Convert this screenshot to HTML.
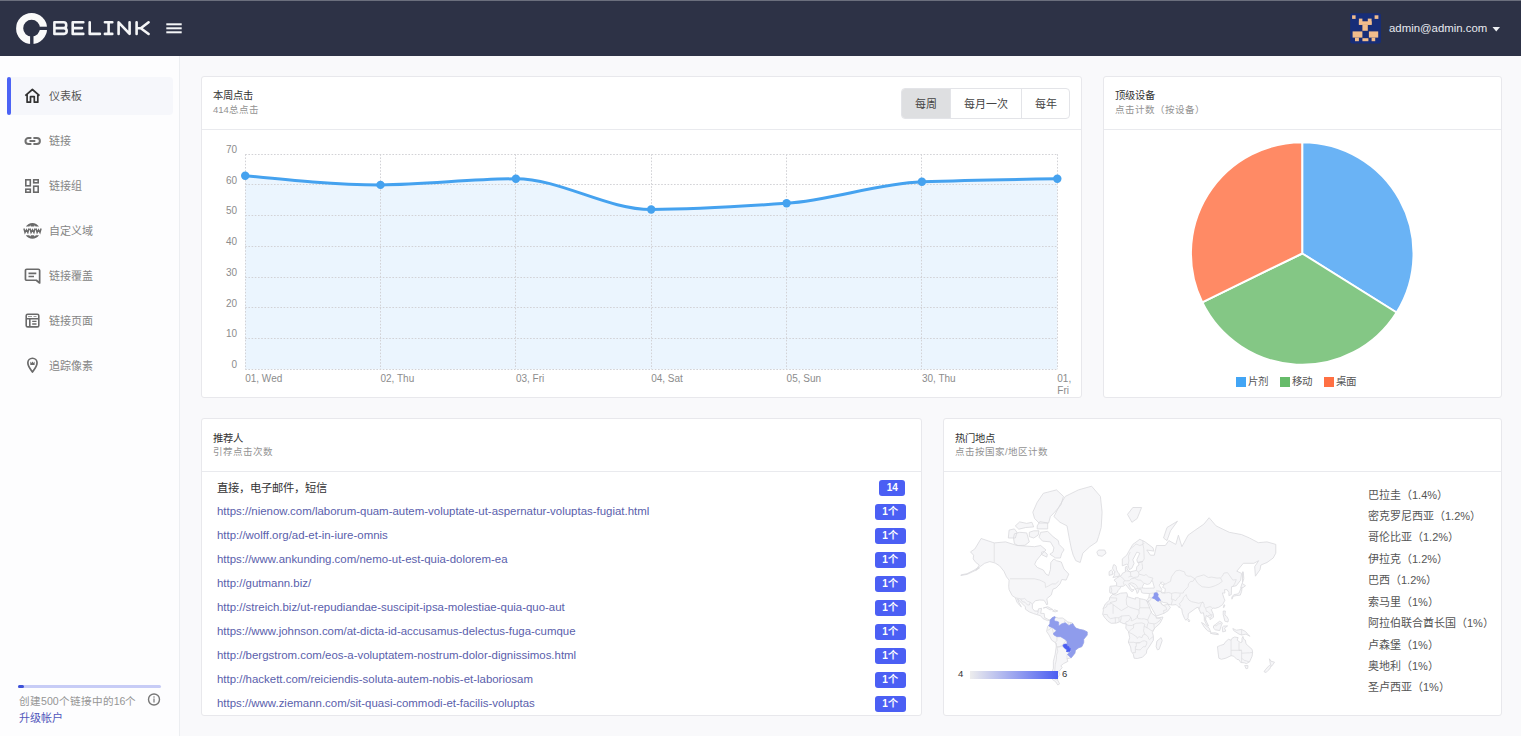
<!DOCTYPE html>
<html lang="zh-CN"><head><meta charset="utf-8">
<style>
*{margin:0;padding:0;box-sizing:border-box}
html,body{width:1521px;height:736px;overflow:hidden;background:#f9f9fb;font-family:"Liberation Sans",sans-serif;color:#333}
.abs{position:absolute}
#hdr{position:absolute;left:0;top:0;width:1521px;height:56px;background:#2d3246;border-top:1px solid #6b6f7d}
#side{position:absolute;left:0;top:56px;width:180px;height:680px;background:#fdfdfe;border-right:1px solid #eceef1}
.mi{position:absolute;left:7px;width:166px;height:38px;font-size:11px;color:#858585}
.mi.act{background:#f6f7fb;border-radius:4px}
.mi.act:before{content:"";position:absolute;left:0;top:0;width:3.5px;height:38px;background:#4c63f5;border-radius:3px}
.mi svg{position:absolute;left:17px;top:11px}
.mi span{position:absolute;left:42px;top:12px;line-height:14px}
.card{position:absolute;background:#fff;border:1px solid #e8e8ec;border-radius:3px}
.ch{position:absolute;left:0;top:0;right:0;height:53px;border-bottom:1px solid #e9eaee}
.ct{position:absolute;left:11px;top:12px;font-size:10.3px;font-weight:500;color:#333;line-height:13px}
.cs{position:absolute;left:11px;top:26px;font-size:9.5px;color:#939393;line-height:13px}
.url{position:absolute;left:16px;font-size:11.45px;color:#5a60ac;line-height:14px;white-space:nowrap}
.bdg{position:absolute;height:15.5px;background:#4b5ff4;border-radius:3px;color:#fff;font-size:10px;font-weight:bold;text-align:center;line-height:15.5px}
.loc{position:absolute;left:425px;font-size:11px;color:#555;line-height:14px;white-space:nowrap}
.yl{position:absolute;font-size:10px;color:#8c8c8c;text-align:right;width:30px;line-height:12px}
.xl{position:absolute;font-size:10px;color:#8c8c8c;line-height:12px;white-space:nowrap}
</style></head><body>
<div id="hdr">
  <svg class="abs" style="left:0;top:-1px" width="200" height="56" viewBox="0 0 200 56">
    <path fill="#fafafa" fill-rule="evenodd" d="M31.6,13 A15.5,15.5 0 1 0 31.6,44 A15.5,15.5 0 1 0 31.6,13 Z M31.6,19.8 A8.4,8.4 0 1 1 31.6,36.6 A8.4,8.4 0 1 1 31.6,19.8 Z"/>
    <rect x="39" y="26.7" width="10" height="3.3" fill="#2d3246"/>
    <rect x="30.1" y="35" width="3.4" height="10" fill="#2d3246"/>
    <g fill="none" stroke="#f4f5f7" stroke-width="2.6" stroke-linejoin="round" stroke-linecap="round">
      <path d="M54.4,22.3 V33.9 M54.4,22.3 H63.6 A2.6,2.6 0 0 1 66.2,24.9 V25.5 A2.6,2.6 0 0 1 63.6,28.1 H54.4 M54.4,28.1 H64 A2.9,2.9 0 0 1 66.7,31 V31 A2.9,2.9 0 0 1 64,33.9 H54.4"/>
      <path d="M83.3,22.3 H72.7 V33.9 H83.3 M72.7,28.1 H82"/>
      <path d="M89.7,22.3 V33.9 H99.9"/>
      <path d="M104.9,22.3 H112.3 M104.9,33.9 H112.3 M108.6,22.3 V33.9"/>
      <path d="M118.6,33.9 V22.3 L129.6,33.9 V22.3"/>
      <path d="M136.6,22.3 V34 M148.6,22.3 L140.8,28.2 L148.6,34 M136.6,28.2 H140.8"/>
    </g>
    <g fill="#f4f5f7"><rect x="166.3" y="23.3" width="15.4" height="2"/><rect x="166.3" y="27.3" width="15.4" height="2"/><rect x="166.3" y="31.3" width="15.4" height="2"/></g>
  </svg>
  <svg class="abs" style="left:1345px;top:7px" width="40" height="40" viewBox="1345 8 40 40">
    <rect x="1350.2" y="13.2" width="30.7" height="30.4" rx="2" fill="#172d78"/>
    <g fill="#f2bd8c">
      <rect x="1352.1" y="15.3" width="3.5" height="3.6"/><rect x="1374.6" y="15.3" width="3.8" height="3.6"/>
      <rect x="1358.9" y="18.6" width="3.5" height="6.2"/><rect x="1367.8" y="18.6" width="3.8" height="6.2"/>
      <rect x="1358.9" y="21.3" width="12.7" height="3.5"/><rect x="1362.4" y="24.3" width="5.4" height="6.5"/>
      <rect x="1352.6" y="31.4" width="9.8" height="6.2"/><rect x="1368.9" y="31.4" width="9.3" height="6.2"/>
      <rect x="1362.4" y="38.2" width="6" height="3"/><rect x="1355" y="37.6" width="3.9" height="3.6"/><rect x="1371.6" y="37.6" width="3.6" height="3.6"/>
    </g>
  </svg>
  <div class="abs" style="left:1389px;top:19px;font-size:11.4px;color:#e8eaf0;line-height:16px">admin@admin.com</div>
  <svg class="abs" style="left:1492px;top:25px" width="9" height="6"><path d="M0.5,1 L8,1 L4.25,5.5 Z" fill="#eef0f4"/></svg>
</div>

<div id="side">
  <div class="mi act" style="top:21px">
    <svg width="17" height="16" viewBox="0 0 17 16"><path d="M1.3,7.7 L8.4,1.5 L15.5,7.7 M3.1,6.3 V14.2 H6.5 V8.6 H10.3 V14.2 H13.8 V6.3" fill="none" stroke="#333" stroke-width="1.7" stroke-linejoin="round"/></svg>
    <span style="color:#555">仪表板</span>
  </div>
  <div class="mi" style="top:66px">
    <svg width="17" height="16" viewBox="0 0 17 16"><path d="M7.4,5 H4.5 A3.05,3.05 0 0 0 4.5,11.1 H7.4 M9.4,5 H12.85 A3.05,3.05 0 0 1 12.85,11.1 H9.4 M5.5,8.1 H11.3" fill="none" stroke="#707070" stroke-width="2"/></svg>
    <span>链接</span>
  </div>
  <div class="mi" style="top:111px">
    <svg width="16" height="16" viewBox="0 0 16 16"><g fill="none" stroke="#6a6a6a" stroke-width="1.6"><rect x="1.8" y="1.8" width="4.5" height="6"/><rect x="9.7" y="1.8" width="4.5" height="3"/><rect x="1.8" y="11.2" width="4.5" height="3"/><rect x="9.7" y="8.2" width="4.5" height="6"/></g></svg>
    <span>链接组</span>
  </div>
  <div class="mi" style="top:156px">
    <svg style="left:15px;top:5px" width="22" height="24" viewBox="22 217 22 24"><g fill="#6a6a6a"><path d="M25.8,226.6 A7.8,7.8 0 0 1 39,226.6 Z M25.8,235.2 A7.8,7.8 0 0 0 39,235.2 Z"/></g><g fill="#fff"><path d="M29.3,226.7 L30.2,225.2 L31.1,226.7 Z M33.9,226.7 L34.8,225.2 L35.7,226.7 Z M29.3,235.1 L30.2,236.6 L31.1,235.1 Z M33.9,235.1 L34.8,236.6 L35.7,235.1 Z"/></g><path d="M23.90,228.5 L25.00,232.5 L26.43,229.8 L27.85,232.5 L28.95,228.5 M29.97,228.5 L31.07,232.5 L32.50,229.8 L33.92,232.5 L35.02,228.5 M36.04,228.5 L37.14,232.5 L38.57,229.8 L39.99,232.5 L41.09,228.5 " fill="none" stroke="#6a6a6a" stroke-width="1.4" stroke-linejoin="miter"/></svg>
    <span>自定义域</span>
  </div>
  <div class="mi" style="top:201px">
    <svg width="17" height="17" viewBox="0 0 17 17"><g fill="none" stroke="#6a6a6a" stroke-width="1.7" stroke-linejoin="round"><path d="M2.8,1.25 H14.3 Q15.65,1.25 15.65,2.6 V15 L12.3,12.25 H2.8 Q1.45,12.25 1.45,10.9 V2.6 Q1.45,1.25 2.8,1.25 Z"/><path d="M4.5,5.4 H12.3 M4.5,8.5 H10"/></g></svg>
    <span>链接覆盖</span>
  </div>
  <div class="mi" style="top:246px">
    <svg width="17" height="16" viewBox="0 0 17 16"><g fill="none" stroke="#6a6a6a" stroke-width="1.6"><rect x="2.2" y="1.2" width="12.6" height="12.7" rx="1.5"/><path d="M2.2,5.8 H14.8 M5.8,5.8 V13.9"/><path d="M8.2,8.3 H12.5 M8.2,11 H12.5" stroke-width="1.3"/><path d="M4,3.5 H8 M9.5,3.5 H12.5" stroke="#9a9a9a" stroke-width="1"/></g></svg>
    <span>链接页面</span>
  </div>
  <div class="mi" style="top:291px">
    <svg style="top:10px" width="17" height="17" viewBox="0 0 17 17"><path d="M8.45,15 C6.5,12.5 3.85,9.4 3.85,5.85 A4.6,4.6 0 0 1 13.05,5.85 C13.05,9.4 10.4,12.5 8.45,15 Z" fill="none" stroke="#6a6a6a" stroke-width="1.7" stroke-linejoin="round"/><path d="M6.3,4.5 L7.4,5.9 L8.45,4.6 L9.5,5.9 L10.6,4.5 V7.9 H6.3 Z" fill="#6a6a6a"/></svg>
    <span>追踪像素</span>
  </div>
  <div class="abs" style="left:18px;top:629px;width:143px;height:3px;background:#c7ccf6;border-radius:2px"><div style="width:6px;height:3px;background:#3e51d8;border-radius:2px"></div></div>
  <div class="abs" style="left:19px;top:637.5px;font-size:10.6px;color:#959595;line-height:14px">创建500个链接中的16个</div>
  <svg class="abs" style="left:147px;top:637px" width="14" height="14" viewBox="0 0 14 14"><circle cx="7" cy="6.5" r="5.5" fill="none" stroke="#777" stroke-width="1.4"/><rect x="6.4" y="5.5" width="1.2" height="4" fill="#777"/><circle cx="7" cy="4" r="0.75" fill="#777"/></svg>
  <div class="abs" style="left:19px;top:655px;font-size:11px;color:#5057bb;line-height:14px">升级帐户</div>
</div>

<!-- card 1 -->
<div class="card" style="left:201px;top:76px;width:881px;height:322px">
  <div class="ch"></div>
  <div class="ct">本周点击</div>
  <div class="cs">414总点击</div>
  <div class="abs" style="left:698.5px;top:11px;width:169px;height:31px;border:1px solid #e3e4e8;border-radius:4px;overflow:hidden;font-size:11px;font-weight:500;color:#444">
    <div class="abs" style="left:0;top:0;width:48px;height:29px;background:#dedfe1"></div>
    <div class="abs" style="left:48px;top:0;width:1px;height:29px;background:#e3e4e8"></div>
    <div class="abs" style="left:119px;top:0;width:1px;height:29px;background:#e3e4e8"></div>
    <div class="abs" style="left:0;top:8px;width:48px;text-align:center;line-height:14px">每周</div>
    <div class="abs" style="left:49px;top:8px;width:70px;text-align:center;line-height:14px">每月一次</div>
    <div class="abs" style="left:120px;top:8px;width:48px;text-align:center;line-height:14px">每年</div>
  </div>
</div>
<svg class="abs" style="left:0;top:0" width="1521" height="736" viewBox="0 0 1521 736">
<path fill="#ebf5fe" d="M245.2,175.7 C290.3,180.3 335.4,184.9 380.5,184.9 C425.7,184.9 470.8,178.8 515.9,178.8 C561.0,178.8 606.1,209.5 651.2,209.5 C696.4,209.5 741.5,206.5 786.6,203.3 C831.7,200.2 876.8,183.6 921.9,181.8 C967.1,180.1 1012.2,179.4 1057.3,178.8 L1057.3,369.2 L245.2,369.2 Z"/>
<path stroke="#d2d2d6" stroke-width="1" stroke-dasharray="1.6,1.6" fill="none" d="M245.2,369.5 H1057.3 M245.2,338.5 H1057.3 M245.2,307.5 H1057.3 M245.2,277.5 H1057.3 M245.2,246.5 H1057.3 M245.2,215.5 H1057.3 M245.2,184.5 H1057.3 M245.2,154.5 H1057.3 M245.5,154.2 V369.2 M380.5,154.2 V369.2 M515.5,154.2 V369.2 M651.5,154.2 V369.2 M786.5,154.2 V369.2 M921.5,154.2 V369.2 M1057.5,154.2 V369.2"/>
<path fill="none" stroke="#45a2ef" stroke-width="3" d="M245.2,175.7 C290.3,180.3 335.4,184.9 380.5,184.9 C425.7,184.9 470.8,178.8 515.9,178.8 C561.0,178.8 606.1,209.5 651.2,209.5 C696.4,209.5 741.5,206.5 786.6,203.3 C831.7,200.2 876.8,183.6 921.9,181.8 C967.1,180.1 1012.2,179.4 1057.3,178.8"/>
<circle cx="245.2" cy="175.7" r="4.2" fill="#45a2ef"/>
<circle cx="380.5" cy="184.9" r="4.2" fill="#45a2ef"/>
<circle cx="515.9" cy="178.8" r="4.2" fill="#45a2ef"/>
<circle cx="651.2" cy="209.5" r="4.2" fill="#45a2ef"/>
<circle cx="786.6" cy="203.3" r="4.2" fill="#45a2ef"/>
<circle cx="921.9" cy="181.8" r="4.2" fill="#45a2ef"/>
<circle cx="1057.3" cy="178.8" r="4.2" fill="#45a2ef"/>
</svg>
<div class="yl" style="left:207px;top:358.9px">0</div>
<div class="yl" style="left:207px;top:328.2px">10</div>
<div class="yl" style="left:207px;top:297.5px">20</div>
<div class="yl" style="left:207px;top:266.8px">30</div>
<div class="yl" style="left:207px;top:236.0px">40</div>
<div class="yl" style="left:207px;top:205.3px">50</div>
<div class="yl" style="left:207px;top:174.6px">60</div>
<div class="yl" style="left:207px;top:143.9px">70</div>
<div class="xl" style="left:245.2px;top:373px">01, Wed</div>
<div class="xl" style="left:380.5px;top:373px">02, Thu</div>
<div class="xl" style="left:515.9px;top:373px">03, Fri</div>
<div class="xl" style="left:651.2px;top:373px">04, Sat</div>
<div class="xl" style="left:786.6px;top:373px">05, Sun</div>
<div class="xl" style="left:921.9px;top:373px">30, Thu</div>
<div class="xl" style="left:1057.3px;top:373px">01,<br>Fri</div>

<!-- card 2 -->
<div class="card" style="left:1103px;top:76px;width:399px;height:322px">
  <div class="ch"></div>
  <div class="ct">顶级设备</div>
  <div class="cs">点击计数（按设备）</div>
</div>

<!-- card 3 -->
<div class="card" style="left:201px;top:418px;width:721px;height:298px">
  <div class="ch"></div>
  <div class="ct" style="top:13px">推荐人</div>
  <div class="cs">引荐点击次数</div>
</div>

<!-- card 4 -->
<div class="card" style="left:943px;top:418px;width:559px;height:298px">
  <div class="ch"></div>
  <div class="ct" style="top:13px">热门地点</div>
  <div class="cs">点击按国家/地区计数</div>
</div>
<!--PIE-->
<svg class="abs" style="left:0;top:0" width="1521" height="736" viewBox="0 0 1521 736">
<path fill="#6ab3f5" stroke="#fff" stroke-width="2" stroke-linejoin="round" d="M1302.2,253.5 L1302.2,142.2 A111.3,111.3 0 0 1 1396.6,312.5 Z"/>
<path fill="#84c785" stroke="#fff" stroke-width="2" stroke-linejoin="round" d="M1302.2,253.5 L1396.6,312.5 A111.3,111.3 0 0 1 1202.2,302.3 Z"/>
<path fill="#ff8a65" stroke="#fff" stroke-width="2" stroke-linejoin="round" d="M1302.2,253.5 L1202.2,302.3 A111.3,111.3 0 0 1 1302.2,142.2 Z"/>
</svg>
<div class="abs" style="left:1236px;top:377px;width:10px;height:9.5px;background:#42a5f5"></div>
<div class="abs" style="left:1248px;top:374px;font-size:10.5px;color:#555;line-height:14px">片剂</div>
<div class="abs" style="left:1280px;top:377px;width:10px;height:9.5px;background:#66bb6a"></div>
<div class="abs" style="left:1292px;top:374px;font-size:10.5px;color:#555;line-height:14px">移动</div>
<div class="abs" style="left:1324px;top:377px;width:10px;height:9.5px;background:#ff7043"></div>
<div class="abs" style="left:1336px;top:374px;font-size:10.5px;color:#555;line-height:14px">桌面</div>
<!--REF-->
<div class="abs" style="left:217px;top:481px;font-size:11.3px;font-weight:500;color:#333;line-height:15px">直接，电子邮件，短信</div>
<div class="bdg" style="left:879.3px;top:480.3px;width:25.8px">14</div>
<div class="url" style="left:217px;top:504px">https://nienow.com/laborum-quam-autem-voluptate-ut-aspernatur-voluptas-fugiat.html</div>
<div class="bdg" style="left:874.5px;top:504.2px;width:31px">1个</div>
<div class="url" style="left:217px;top:528px">http://wolff.org/ad-et-in-iure-omnis</div>
<div class="bdg" style="left:874.5px;top:528.2px;width:31px">1个</div>
<div class="url" style="left:217px;top:552px">https://www.ankunding.com/nemo-ut-est-quia-dolorem-ea</div>
<div class="bdg" style="left:874.5px;top:552.2px;width:31px">1个</div>
<div class="url" style="left:217px;top:576px">http://gutmann.biz/</div>
<div class="bdg" style="left:874.5px;top:576.2px;width:31px">1个</div>
<div class="url" style="left:217px;top:600px">http://streich.biz/ut-repudiandae-suscipit-ipsa-molestiae-quia-quo-aut</div>
<div class="bdg" style="left:874.5px;top:600.2px;width:31px">1个</div>
<div class="url" style="left:217px;top:624px">https://www.johnson.com/at-dicta-id-accusamus-delectus-fuga-cumque</div>
<div class="bdg" style="left:874.5px;top:624.2px;width:31px">1个</div>
<div class="url" style="left:217px;top:648px">http://bergstrom.com/eos-a-voluptatem-nostrum-dolor-dignissimos.html</div>
<div class="bdg" style="left:874.5px;top:648.2px;width:31px">1个</div>
<div class="url" style="left:217px;top:672px">http://hackett.com/reiciendis-soluta-autem-nobis-et-laboriosam</div>
<div class="bdg" style="left:874.5px;top:672.2px;width:31px">1个</div>
<div class="url" style="left:217px;top:696px">https://www.ziemann.com/sit-quasi-commodi-et-facilis-voluptas</div>
<div class="bdg" style="left:874.5px;top:696.2px;width:31px">1个</div>
<!--LOC-->
<div class="loc" style="left:1368px;top:487.5px">巴拉圭（1.4%）</div>
<div class="loc" style="left:1368px;top:508.9px">密克罗尼西亚（1.2%）</div>
<div class="loc" style="left:1368px;top:530.4px">哥伦比亚（1.2%）</div>
<div class="loc" style="left:1368px;top:551.8px">伊拉克（1.2%）</div>
<div class="loc" style="left:1368px;top:573.2px">巴西（1.2%）</div>
<div class="loc" style="left:1368px;top:594.6px">索马里（1%）</div>
<div class="loc" style="left:1368px;top:616.1px">阿拉伯联合酋长国（1%）</div>
<div class="loc" style="left:1368px;top:637.5px">卢森堡（1%）</div>
<div class="loc" style="left:1368px;top:658.9px">奥地利（1%）</div>
<div class="loc" style="left:1368px;top:680.4px">圣卢西亚（1%）</div>
<!--MAP-->
<svg class="abs" style="left:943px;top:472px" width="420" height="244" viewBox="943 472 420 244">
<path fill="#f6f6f8" stroke="#d9d9dd" stroke-width="0.8" stroke-linejoin="round" fill-rule="nonzero" d="M970.5,551.9 L974.9,548.9 L981.1,538.5 L994.2,542.9 L1005.6,541.9 L1017.0,545.5 L1034.6,546.7 L1040.7,545.5 L1046.0,550.0 L1041.6,554.2 L1036.3,560.7 L1034.7,564.2 L1037.2,567.4 L1043.3,570.0 L1046.0,574.1 L1048.6,575.5 L1050.4,569.7 L1050.8,562.5 L1053.9,558.9 L1056.5,560.7 L1061.3,562.0 L1064.0,569.0 L1068.8,574.1 L1066.1,580.1 L1061.8,579.5 L1060.0,583.9 L1056.1,588.0 L1053.0,589.1 L1051.2,595.1 L1046.8,598.7 L1047.7,604.1 L1046.8,605.0 L1045.3,602.2 L1043.8,600.2 L1039.8,600.0 L1035.4,600.7 L1032.4,604.1 L1032.4,608.3 L1034.6,611.0 L1038.1,611.0 L1038.5,608.8 L1041.6,608.3 L1040.7,613.3 L1044.2,613.5 L1044.7,617.7 L1048.2,619.4 L1050.1,620.1 L1047.7,620.7 L1042.9,618.6 L1040.7,615.8 L1036.8,614.6 L1033.7,613.6 L1029.3,611.9 L1025.4,609.2 L1025.4,606.9 L1019.7,601.2 L1017.5,598.7 L1018.8,602.2 L1021.4,606.9 L1019.7,605.5 L1017.0,602.2 L1015.3,597.7 L1012.2,595.6 L1009.1,589.7 L1008.7,586.3 L1009.1,580.1 L1006.5,576.9 L1003.9,571.2 L999.5,565.8 L995.1,563.0 L989.8,561.6 L984.6,563.3 L980.2,566.6 L975.8,570.5 L979.3,565.0 L975.8,562.5 L973.2,558.9 L973.6,555.2Z M1037.2,528.9 L1047.7,528.9 L1047.7,523.0 L1039.8,521.6 L1037.2,525.9Z M1015.3,525.9 L1019.7,521.9 L1026.7,523.4 L1031.9,522.3 L1033.7,526.9 L1025.8,527.5 L1018.8,529.2Z M1029.3,536.6 L1033.7,538.0 L1038.1,535.2 L1039.0,530.8 L1033.7,530.8 L1029.3,532.3Z M1041.6,554.6 L1046.8,557.1 L1047.3,554.2 L1044.2,551.5 L1041.6,552.1Z M979.3,568.2 L974.0,571.1 L967.0,574.4 L960.9,575.5 L960.9,574.9 L967.0,573.7 L974.0,570.2 L978.4,567.4Z M1053.9,516.5 L1060.0,504.9 L1065.3,496.4 L1078.4,489.9 L1091.6,486.2 L1100.4,496.4 L1102.1,512.2 L1101.2,527.5 L1098.6,536.6 L1096.8,541.9 L1089.8,546.7 L1082.8,553.2 L1080.2,562.5 L1075.8,560.7 L1073.2,555.2 L1071.4,548.9 L1069.7,540.6 L1067.0,525.9 L1060.0,522.3Z M1064.0,550.0 L1061.8,553.2 L1060.4,558.0 L1055.6,558.0 L1049.9,554.2 L1053.0,552.1 L1053.9,547.8 L1050.4,541.9 L1042.5,541.1 L1039.0,537.2 L1040.7,532.3 L1047.7,531.4 L1053.0,536.6 L1058.3,540.6 L1059.1,544.4 L1063.5,548.9Z M1013.5,538.0 L1014.4,533.8 L1019.7,532.3 L1026.7,532.9 L1029.3,541.9 L1024.9,545.3 L1017.9,545.5 L1014.4,543.6Z M1032.8,512.2 L1037.2,502.3 L1043.3,493.3 L1056.5,489.9 L1063.5,496.4 L1060.9,504.9 L1054.7,512.2 L1050.4,516.5 L1048.6,523.0 L1039.0,523.0 L1034.6,518.5Z M1008.3,538.0 L1009.1,530.1 L1014.4,528.9 L1017.0,532.3 L1015.3,538.0Z M1050.1,620.1 L1052.1,617.7 L1054.7,616.8 L1058.3,618.1 L1062.6,618.0 L1065.3,619.9 L1067.9,622.0 L1072.3,622.9 L1074.0,625.5 L1075.8,628.1 L1079.3,629.3 L1083.7,630.2 L1087.2,631.9 L1087.2,635.0 L1083.7,639.3 L1083.7,642.5 L1081.9,646.6 L1078.4,647.9 L1075.4,650.3 L1074.9,653.2 L1071.4,657.7 L1067.0,658.8 L1067.9,661.4 L1063.5,663.6 L1060.9,665.8 L1062.2,667.6 L1058.7,671.7 L1060.0,674.3 L1057.4,678.2 L1057.8,680.3 L1059.6,683.9 L1057.8,685.0 L1055.6,681.7 L1052.5,679.6 L1051.7,673.0 L1053.4,668.1 L1053.4,661.4 L1055.2,654.2 L1056.1,647.5 L1056.5,643.4 L1051.7,640.2 L1049.0,635.0 L1046.6,631.5 L1047.3,628.1 L1047.7,626.3 L1048.8,625.5 L1049.9,623.8Z M1109.6,591.1 L1110.0,586.3 L1116.6,585.7 L1116.6,582.7 L1114.0,580.1 L1116.6,578.2 L1119.7,576.2 L1121.4,575.5 L1122.3,573.4 L1125.4,571.9 L1125.4,566.9 L1127.1,566.3 L1127.1,569.0 L1128.9,571.2 L1130.2,571.9 L1134.1,570.9 L1136.3,570.5 L1136.8,566.6 L1139.0,565.0 L1138.5,562.5 L1142.9,561.6 L1137.6,562.5 L1136.8,559.8 L1139.8,553.2 L1136.8,552.1 L1132.8,559.8 L1134.1,563.3 L1131.9,568.2 L1129.3,569.7 L1128.0,565.0 L1126.7,564.2 L1122.3,565.8 L1122.3,558.9 L1126.7,555.2 L1130.2,548.9 L1132.8,544.4 L1139.8,539.3 L1145.1,541.9 L1153.0,547.8 L1153.9,551.1 L1146.8,550.0 L1150.4,555.2 L1154.3,555.2 L1156.5,545.5 L1165.3,545.5 L1168.8,540.6 L1175.8,544.4 L1178.4,535.2 L1181.9,546.7 L1188.1,535.2 L1194.2,530.8 L1203.9,524.1 L1209.1,517.7 L1216.1,525.9 L1229.3,532.3 L1241.6,534.6 L1249.5,538.0 L1258.3,542.7 L1267.0,541.9 L1275.8,544.4 L1275.8,553.2 L1273.2,558.0 L1267.0,562.5 L1260.9,565.0 L1260.0,569.7 L1255.4,576.2 L1254.7,566.6 L1258.7,560.7 L1253.9,563.3 L1243.3,563.3 L1236.8,571.2 L1241.6,573.4 L1240.7,580.1 L1236.3,585.7 L1231.5,586.8 L1231.3,594.6 L1228.9,595.6 L1228.9,592.5 L1227.1,589.7 L1224.5,589.7 L1224.9,593.0 L1222.3,593.0 L1224.0,598.2 L1224.9,600.2 L1222.7,604.6 L1218.8,607.2 L1215.3,608.3 L1213.1,608.1 L1211.3,609.7 L1213.3,614.2 L1213.5,617.3 L1210.0,619.7 L1210.0,618.1 L1208.0,616.7 L1206.1,615.5 L1205.6,619.9 L1208.7,626.1 L1206.5,624.6 L1204.3,620.3 L1204.3,617.3 L1203.4,612.8 L1200.8,613.3 L1199.0,609.2 L1198.2,607.2 L1196.0,608.0 L1193.8,609.7 L1188.3,613.7 L1188.1,617.7 L1185.9,620.3 L1184.6,618.6 L1182.4,613.3 L1181.7,608.8 L1179.3,607.4 L1178.0,606.5 L1176.2,604.6 L1172.3,605.0 L1167.9,604.4 L1167.5,603.1 L1163.1,602.4 L1160.0,600.2 L1161.8,604.1 L1163.1,605.5 L1166.6,604.6 L1167.4,603.8 L1170.4,607.4 L1167.9,610.9 L1164.0,613.3 L1156.1,616.2 L1155.2,614.2 L1152.1,608.8 L1148.6,602.2 L1148.5,600.7 L1147.9,602.4 L1146.5,600.3 L1148.2,598.7 L1149.0,596.7 L1149.5,593.5 L1143.3,593.2 L1141.6,592.5 L1141.1,590.3 L1140.7,589.1 L1139.0,589.1 L1138.5,591.9 L1137.2,593.5 L1136.3,590.3 L1135.0,589.1 L1134.6,587.4 L1131.9,585.7 L1129.7,583.3 L1128.7,583.9 L1130.2,587.4 L1131.8,589.7 L1134.1,589.7 L1131.9,591.9 L1131.6,591.4 L1128.4,588.0 L1127.1,586.3 L1125.6,584.6 L1123.2,586.3 L1120.7,586.3 L1120.5,587.7 L1117.9,590.8 L1117.5,592.3 L1116.1,593.3 L1113.1,594.1 L1112.2,593.0 L1110.0,593.0Z M1102.7,614.4 L1103.4,610.1 L1103.0,608.8 L1105.2,604.1 L1109.4,600.2 L1109.6,597.7 L1112.6,594.3 L1116.1,595.1 L1120.5,593.2 L1126.7,592.7 L1127.5,595.1 L1127.1,596.5 L1131.2,597.9 L1135.4,599.2 L1135.4,597.7 L1138.1,597.7 L1139.8,598.7 L1143.3,599.3 L1146.5,600.3 L1149.0,606.1 L1150.8,611.0 L1152.1,613.5 L1155.9,616.4 L1156.5,618.1 L1162.9,617.0 L1162.6,618.2 L1160.0,623.3 L1154.7,628.1 L1152.4,632.4 L1153.4,636.3 L1153.4,640.2 L1149.0,647.0 L1146.8,650.1 L1146.4,653.2 L1142.5,657.2 L1137.2,658.5 L1134.1,658.2 L1133.3,654.2 L1131.2,651.3 L1130.6,647.0 L1128.3,642.0 L1129.7,637.6 L1128.4,631.5 L1125.8,628.1 L1126.2,623.9 L1123.2,623.5 L1119.7,621.8 L1116.1,623.1 L1111.3,623.3 L1107.8,621.2 L1106.1,619.0 L1104.7,617.7Z M1112.9,577.5 L1119.2,576.2 L1119.4,573.8 L1117.9,572.7 L1116.6,569.7 L1116.1,566.3 L1114.8,564.8 L1113.5,564.8 L1112.5,568.2 L1113.5,570.5 L1115.3,571.9 L1114.0,573.0 L1114.4,575.2Z M1109.1,575.4 L1112.6,574.5 L1112.6,571.2 L1111.3,570.0 L1109.1,571.7Z M1096.8,552.1 L1098.6,550.0 L1104.7,550.0 L1106.1,553.2 L1102.1,556.3 L1098.2,555.5Z M1127.5,514.4 L1132.8,507.5 L1141.6,507.5 L1137.2,518.5 L1131.9,522.3Z M1163.5,538.0 L1167.0,527.5 L1177.5,521.2 L1170.5,530.8 L1167.0,540.6Z M1231.9,599.2 L1233.3,596.2 L1236.3,595.6 L1240.3,595.1 L1241.6,591.4 L1242.0,588.0 L1240.7,588.6 L1239.4,592.5 L1237.2,594.1 L1234.1,594.6 L1231.9,596.7Z M1240.7,588.0 L1242.0,583.3 L1245.5,585.7 L1243.3,587.4Z M1242.5,582.7 L1243.8,578.8 L1243.3,571.9 L1242.5,571.9Z M1223.3,607.4 L1224.0,604.8 L1224.9,605.0 L1223.8,607.8Z M1223.2,611.0 L1225.4,611.0 L1224.9,615.1 L1226.7,616.4 L1228.4,619.4 L1228.0,622.0 L1224.9,621.2 L1224.0,617.7 L1223.2,614.6Z M1201.5,622.5 L1203.9,623.8 L1209.1,628.1 L1210.9,632.3 L1207.4,630.6 L1204.3,627.2Z M1210.2,633.0 L1215.3,632.8 L1218.3,633.8 L1218.3,634.7 L1212.6,633.9Z M1213.5,625.9 L1215.3,624.6 L1219.7,621.2 L1222.3,622.9 L1221.0,626.3 L1219.7,630.6 L1215.3,629.8 L1213.5,628.1Z M1222.7,631.9 L1222.3,627.2 L1223.6,626.1 L1227.6,625.9 L1224.5,628.1 L1225.8,631.1Z M1232.8,628.5 L1236.3,630.2 L1241.6,629.4 L1245.5,631.5 L1247.7,634.1 L1249.9,636.3 L1246.0,634.1 L1241.6,635.0 L1239.0,634.1 L1233.7,630.6Z M1217.5,646.6 L1217.9,650.8 L1218.8,658.2 L1221.4,659.3 L1225.8,658.2 L1231.1,655.7 L1233.7,656.2 L1236.8,659.3 L1239.0,659.8 L1240.7,662.5 L1244.2,662.8 L1246.4,663.6 L1249.5,661.9 L1252.1,656.2 L1252.6,652.2 L1252.1,649.4 L1249.0,646.6 L1246.0,643.8 L1245.4,640.2 L1243.8,639.3 L1242.9,636.4 L1242.0,638.4 L1242.0,642.0 L1240.3,642.5 L1237.2,640.2 L1238.1,637.6 L1234.6,637.0 L1231.9,638.4 L1231.1,640.2 L1228.4,639.3 L1224.9,642.5 L1224.0,644.3 L1220.5,645.4Z M1244.7,665.5 L1248.0,665.6 L1247.7,668.4 L1246.0,668.7Z M1269.4,658.8 L1271.0,661.2 L1274.5,662.2 L1273.2,664.1 L1271.4,666.4 L1270.4,663.9Z M1269.4,665.3 L1270.8,666.4 L1269.7,669.1 L1267.9,670.5 L1266.1,672.5 L1264.0,671.7 L1265.7,669.3Z M1161.1,637.6 L1162.2,640.7 L1159.1,649.4 L1157.4,649.8 L1156.1,646.6 L1156.9,641.1Z M1187.9,620.3 L1188.3,618.8 L1189.7,620.7 L1189.0,622.0Z M1043.3,608.0 L1047.7,606.7 L1052.8,609.5 L1049.9,609.8 L1046.0,607.4Z M1052.5,611.0 L1054.7,609.8 L1057.8,611.0 L1055.2,611.9Z"/>
<path fill="#fff" stroke="#dcdcdf" stroke-width="0.8" d="M1142.5,588.0 L1142.5,586.3 L1144.2,583.3 L1147.3,584.5 L1149.9,583.6 L1151.2,581.4 L1152.5,580.8 L1154.3,587.4 L1154.3,588.0 L1149.9,588.2 L1145.5,588.3Z M1159.1,585.1 L1162.2,581.7 L1164.4,583.9 L1162.6,587.4 L1165.3,588.6 L1164.8,593.0 L1161.8,593.0 L1160.9,591.4 L1161.8,589.4Z"/>
<path fill="none" stroke="#dddde0" stroke-width="0.7" stroke-linejoin="round" d="M1010.0,578.8 L1034.6,578.8 L1039.8,580.1 L1045.1,582.7 L1045.5,587.4 L1048.6,585.9 L1052.1,583.9 L1055.6,583.9 L1058.7,581.0 M994.2,542.9 L994.2,562.0 M1015.3,597.7 L1020.5,598.9 L1023.2,598.9 L1024.5,598.4 L1027.5,601.2 L1030.2,602.2 L1032.4,604.1 M1037.2,611.5 L1038.5,611.7 L1037.7,613.3 L1037.0,614.5 M1055.2,642.5 L1056.9,647.0 L1057.8,651.3 L1056.5,655.2 L1056.5,659.3 L1055.2,664.7 L1054.9,669.3 L1054.3,674.3 L1053.4,676.9 L1054.7,679.2 L1057.8,680.3 M1056.8,647.0 L1060.0,646.6 L1063.0,646.7 M1067.0,641.4 L1065.3,641.3 L1063.0,644.3 L1059.1,647.0 L1056.8,647.0 M1056.9,636.7 L1056.9,640.7 L1055.2,642.5 M1051.9,627.4 L1049.0,629.8 L1047.5,630.2 M1053.9,635.0 L1051.9,627.4 M1067.0,658.8 L1066.9,656.2 L1067.4,654.4 M1065.3,619.9 L1064.4,622.0 L1065.3,622.7 M1067.9,622.0 L1068.3,624.0 L1068.8,625.5 M1070.5,622.5 L1070.5,625.5 M1116.3,585.9 L1120.7,586.8 M1111.3,587.4 L1111.8,590.3 L1111.3,592.5 M1120.1,576.2 L1121.8,577.5 L1123.2,578.5 L1124.6,580.7 L1126.7,580.8 L1129.3,580.8 L1131.1,578.8 L1134.6,578.2 L1138.1,580.1 L1140.7,580.1 L1143.8,583.3 M1124.6,580.7 L1123.3,582.4 L1124.0,584.8 M1125.4,570.6 L1130.4,571.9 L1130.9,576.2 L1128.4,577.1 M1130.9,576.2 L1133.7,577.5 L1138.1,576.9 L1139.0,574.1 L1138.5,571.9 L1136.3,570.5 M1138.5,571.9 L1141.6,569.7 L1142.5,569.0 L1142.5,566.6 L1142.0,563.3 M1139.0,574.1 L1144.2,575.5 L1146.0,574.5 L1148.6,576.9 L1153.0,578.2 L1151.2,581.4 M1142.5,561.6 L1144.2,558.9 L1143.8,548.9 L1142.9,544.4 L1142.9,540.6 M1130.2,548.9 L1134.6,545.5 L1135.9,543.9 L1139.8,545.5 L1142.9,544.4 L1144.2,543.1 M1128.0,565.0 L1128.9,560.7 L1128.4,556.1 L1130.2,552.1 M1129.7,583.3 L1131.5,582.7 L1134.6,583.9 L1136.3,585.1 L1137.7,587.4 L1137.2,588.6 M1135.0,589.1 L1137.2,588.6 L1140.7,588.0 L1142.5,588.0 M1149.5,593.5 L1151.2,593.2 L1154.7,592.9 L1156.9,592.8 L1156.5,590.4 L1158.7,590.9 L1160.0,591.4 M1149.0,596.7 L1149.9,597.9 L1152.1,597.9 M1148.5,600.7 L1149.9,600.7 L1151.2,598.7 L1152.1,597.9 M1152.1,597.9 L1154.7,598.9 L1157.1,601.0 L1158.7,601.2 L1161.8,604.1 L1166.1,607.2 L1166.7,609.7 L1163.5,610.6 L1164.0,613.3 M1157.2,592.8 L1158.3,591.0 L1160.0,591.4 M1160.0,591.4 L1164.8,593.0 M1164.8,593.0 L1168.8,592.5 L1171.4,593.4 L1174.9,592.7 L1177.5,592.8 L1180.2,593.2 L1183.3,593.0 L1183.7,591.4 L1188.1,586.8 L1188.5,583.9 L1190.7,581.4 L1192.9,581.3 L1194.8,578.7 M1171.4,593.4 L1171.8,595.1 L1171.4,598.7 L1172.3,600.8 L1171.4,604.1 L1171.9,604.9 M1171.4,598.7 L1175.8,600.7 L1177.1,598.7 L1178.9,596.7 L1179.7,596.4 L1180.2,594.1 M1179.3,607.4 L1180.2,605.5 L1179.3,603.6 L1180.6,602.6 L1182.8,599.7 L1183.3,597.7 L1184.6,596.2 L1186.1,594.6 M1186.1,594.6 L1187.2,597.7 L1189.0,600.2 L1191.6,601.7 L1195.1,602.4 L1198.6,603.3 L1201.2,602.6 L1203.0,602.0 M1203.0,602.0 L1204.3,605.0 L1203.9,606.0 L1205.6,608.3 L1206.9,607.6 L1210.0,606.6 L1211.5,607.3 L1212.6,608.2 M1199.0,609.2 L1199.5,607.8 L1200.4,606.0 L1201.2,603.6 L1203.0,602.0 M1204.3,617.3 L1205.0,618.6 L1206.1,621.2 M1205.6,608.3 L1206.5,611.5 L1207.9,611.6 L1210.4,614.2 L1210.4,615.1 L1208.3,615.5 L1207.9,616.7 M1210.4,615.1 L1212.2,614.6 L1210.9,617.3 L1210.0,618.1 M1161.8,584.5 L1166.1,583.9 L1167.9,582.7 L1170.5,581.4 L1171.4,576.9 L1175.8,570.9 L1179.3,570.2 L1184.6,571.9 L1185.4,574.8 L1188.1,576.2 L1190.7,576.2 L1194.8,578.7 M1160.2,581.7 L1161.8,584.5 M1194.8,578.7 L1196.8,576.9 L1203.9,574.8 L1208.3,577.5 L1211.8,577.1 L1217.0,578.1 L1220.5,577.9 L1222.3,576.2 L1224.0,573.0 L1227.6,572.7 L1232.8,580.1 L1236.3,579.6 L1234.6,583.9 L1232.8,586.3 L1232.5,586.8 M1194.8,578.7 L1197.7,583.3 L1202.1,586.8 L1209.1,587.5 L1211.8,586.8 L1215.3,585.7 L1218.8,583.9 L1222.3,581.4 L1220.5,577.9 M1110.0,597.7 L1116.8,598.1 L1116.4,601.0 L1110.3,602.5 L1110.3,604.1 L1107.4,604.1 L1106.5,606.9 L1103.0,608.8 M1110.3,602.5 L1113.7,605.0 L1118.8,608.8 L1121.4,610.6 L1128.4,606.5 L1130.2,607.4 L1139.0,610.1 L1139.0,609.7 L1139.8,607.8 L1139.8,598.7 M1127.5,595.1 L1126.2,599.7 L1126.7,605.0 L1128.4,606.5 M1139.8,607.8 L1150.2,607.8 M1139.0,610.1 L1139.0,613.7 L1137.6,615.1 L1137.2,616.4 L1138.1,618.6 L1141.6,618.9 L1144.2,618.8 L1147.7,619.9 L1148.6,622.9 L1149.9,623.3 L1153.9,623.8 L1154.7,623.8 L1156.5,623.1 L1160.0,620.3 L1160.9,618.9 L1155.9,617.7 M1153.9,623.8 L1154.3,628.7 L1152.4,631.1 M1147.7,619.9 L1149.9,614.8 L1151.7,611.5 L1150.8,611.0 M1107.4,614.6 L1107.8,616.4 L1110.4,618.6 L1113.5,618.1 L1115.3,617.7 L1118.8,617.7 L1121.4,616.0 L1129.3,615.5 L1130.2,616.8 L1131.5,618.6 L1131.1,620.7 L1132.4,620.7 L1134.6,619.4 L1137.2,617.7 L1137.6,615.1 M1113.1,613.7 L1113.1,605.0 L1113.7,605.0 M1107.4,614.6 L1103.3,614.4 M1115.3,617.7 L1115.4,622.9 M1118.8,617.7 L1119.2,621.9 M1120.3,621.8 L1121.1,618.6 L1121.1,617.1 L1121.4,616.0 M1125.4,623.3 L1126.4,621.6 L1128.4,621.2 L1130.6,617.9 L1130.2,616.8 M1126.2,623.9 L1127.8,625.3 L1131.9,625.5 L1134.1,624.2 L1136.3,623.3 L1142.0,622.9 L1144.9,624.2 L1144.2,626.2 L1143.9,628.5 L1143.5,630.9 L1144.9,634.3 L1142.9,635.0 L1142.0,637.6 L1139.0,636.7 L1137.2,638.4 L1137.0,637.1 L1131.9,633.7 L1128.6,632.4 L1129.3,631.1 L1131.9,628.9 L1133.5,628.1 L1133.7,624.2 M1128.3,642.0 L1129.7,642.3 L1133.7,642.3 L1136.3,642.9 L1139.8,642.7 L1136.3,642.9 L1136.3,646.6 L1135.4,646.6 L1135.4,649.2 L1135.4,652.6 L1132.8,652.7 M1139.8,642.7 L1142.5,641.1 L1144.6,640.8 L1146.8,641.7 L1146.7,643.8 L1145.4,646.8 L1143.3,646.7 L1141.6,648.4 L1140.3,649.8 L1138.1,649.8 L1135.4,649.2 M1144.9,634.3 L1146.8,635.4 L1148.2,637.1 L1148.6,638.9 L1149.5,639.6 L1153.4,636.3 M1144.2,626.2 L1147.7,628.1 L1150.8,630.2 L1152.4,631.1 M1146.8,628.1 L1147.7,623.6 L1148.6,622.9 M1231.1,640.2 L1231.1,655.7 M1231.1,650.3 L1241.6,650.3 M1239.0,642.5 L1239.0,650.3 L1241.6,650.3 L1241.6,662.5 M1241.6,653.2 L1249.5,652.8 L1252.6,652.4 M1241.6,658.2 L1244.2,660.3 L1249.5,661.9 M1241.6,629.4 L1241.6,635.0 M1214.0,625.5 L1216.1,625.9 L1218.8,623.8 L1221.0,623.6 M1030.2,602.2 L1029.3,605.0 L1027.5,605.0 L1024.9,602.2 L1022.3,601.7 L1020.5,598.9"/>
<path fill="#8f9cec" stroke="#8f9cec" stroke-width="0.6" d="M1065.3,622.7 L1068.8,625.5 L1072.7,623.6 L1074.0,625.7 L1075.8,628.1 L1079.3,629.3 L1083.7,630.2 L1087.2,631.9 L1087.2,635.0 L1083.7,639.3 L1083.7,642.5 L1081.9,646.6 L1078.4,647.9 L1075.4,650.3 L1074.9,653.2 L1071.1,657.9 L1067.4,654.4 L1070.7,651.3 L1070.0,649.9 L1070.3,648.4 L1069.2,647.0 L1067.2,646.6 L1066.9,644.7 L1067.0,641.4 L1064.8,639.2 L1060.6,636.7 L1056.9,636.7 L1053.9,635.0 L1053.4,633.2 L1056.5,630.8 L1056.8,628.1 L1056.5,625.9 L1059.1,625.7 L1061.8,623.8Z M1050.1,620.1 L1052.1,617.7 L1054.7,616.6 L1055.4,617.7 L1054.3,619.0 L1054.5,621.0 L1056.5,621.2 L1058.7,622.0 L1058.7,625.5 L1056.5,625.9 L1056.8,628.1 L1056.5,630.8 L1053.4,628.3 L1051.9,627.4 L1049.9,626.7 L1048.6,625.7 L1049.9,623.8Z"/>
<path fill="#8b99ee" stroke="#8b99ee" stroke-width="0.6" d="M1152.1,597.9 L1153.9,595.7 L1154.1,593.3 L1155.2,592.7 L1157.2,592.8 L1158.3,594.4 L1157.8,596.2 L1160.0,599.2 L1160.4,600.4 L1159.3,600.2 L1158.7,601.2 L1157.1,601.0 L1154.7,598.9Z"/>
<path fill="#4a5ef0" stroke="#4a5ef0" stroke-width="0.9" d="M1066.8,644.5 L1066.1,644.1 L1063.8,644.4 L1063.0,645.2 L1063.3,646.4 L1064.4,647.9 L1065.7,648.9 L1067.2,649.5 L1066.5,651.5 L1068.5,651.8 L1070.0,651.1 L1070.0,649.9 L1070.3,648.4 L1069.2,648.3 L1069.0,646.8 L1067.1,646.6Z"/>
</svg>
<div class="abs" style="left:970px;top:671px;width:88px;height:7.5px;background:linear-gradient(to right,#ededed,#4b5ef2)"></div>
<div class="abs" style="left:958px;top:668px;font-size:9.5px;color:#333;line-height:12px">4</div>
<div class="abs" style="left:1062px;top:668px;font-size:9.5px;color:#333;line-height:12px">6</div>
</body></html>
